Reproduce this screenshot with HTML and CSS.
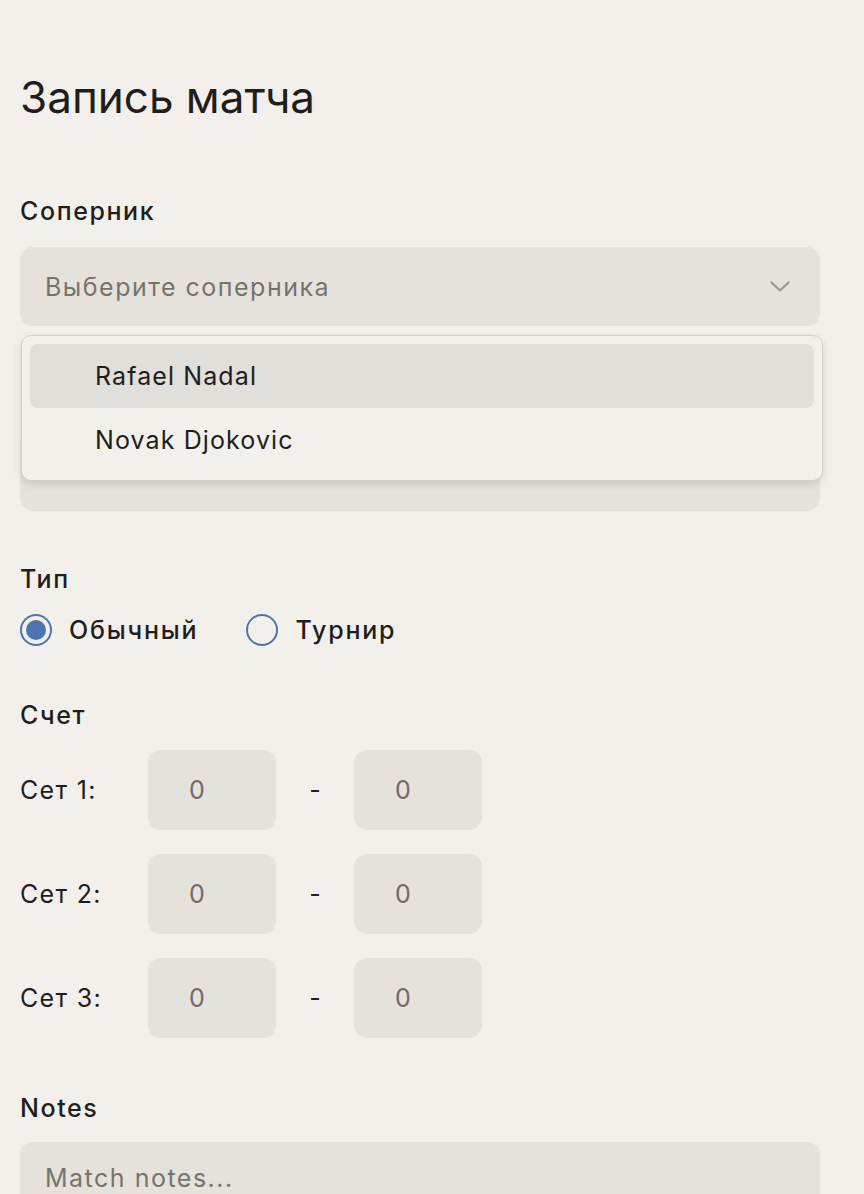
FILE: index.html
```html
<!DOCTYPE html>
<html lang="ru">
<head>
<meta charset="utf-8">
<title>Запись матча</title>
<link rel="stylesheet" href="styles.css">
</head>
<body>
<main class="page">
  <h1 class="title">Запись матча</h1>

  <section class="group group-opponent">
    <div class="label">Соперник</div>
    <div class="select-wrap">
      <div class="select">
        <span class="placeholder">Выберите соперника</span>
        <svg class="chevron" width="20" height="12" viewBox="0 0 20 12"><path d="M1.5 1.5 L10 9.5 L18.5 1.5" fill="none" stroke="#9b9894" stroke-width="2.2" stroke-linecap="round" stroke-linejoin="round"/></svg>
      </div>
      <ul class="menu">
        <li class="menu-item active">Rafael Nadal</li>
        <li class="menu-item">Novak Djokovic</li>
      </ul>
    </div>
    <div class="box hidden-field"></div>
  </section>

  <section class="group group-type">
    <div class="label">Тип</div>
    <div class="radios">
      <label class="radio"><span class="dot checked"></span><span>Обычный</span></label>
      <label class="radio"><span class="dot"></span><span>Турнир</span></label>
    </div>
  </section>

  <section class="group group-score">
    <div class="label">Счет</div>
    <div class="sets">
      <div class="set-row"><span class="set-label">Сет 1:</span><div class="score">0</div><span class="dash">-</span><div class="score">0</div></div>
      <div class="set-row"><span class="set-label">Сет 2:</span><div class="score">0</div><span class="dash">-</span><div class="score">0</div></div>
      <div class="set-row"><span class="set-label">Сет 3:</span><div class="score">0</div><span class="dash">-</span><div class="score">0</div></div>
    </div>
  </section>

  <section class="group group-notes">
    <div class="label">Notes</div>
    <div class="box textarea"><span class="placeholder">Match notes...</span></div>
  </section>
</main>
</body>
</html>
```

FILE: styles.css
```css
* { box-sizing: border-box; }
html, body {
  margin: 0;
  padding: 0;
  background: #f3f0eb;
  font-family: Inter, "Noto Sans", sans-serif;
  color: #1f1e1c;
  overflow: hidden;
  height: 1194px;
}
.page {
  width: 864px;
  padding: 70px 44px 0 20px;
}
.title {
  margin: 0;
  font-size: 44px;
  line-height: 54px;
  font-weight: 400;
  letter-spacing: 0;
}
.label {
  font-size: 25px;
  line-height: 30px;
  font-weight: 500;
  letter-spacing: 1.6px;
}
.group-opponent { margin-top: 72px; }
.group-opponent .label { margin-bottom: 21px; }
.select-wrap { position: relative; }
.select, .box {
  background: #e5e2dc;
  border-radius: 13px;
  height: 79px;
}
.select {
  display: flex;
  align-items: center;
  justify-content: space-between;
  padding: 0 30px 0 25px;
}
.placeholder {
  font-size: 25px;
  color: #76736f;
  letter-spacing: 1.5px;
}
.chevron { display: block; }
.menu {
  position: absolute;
  top: 88px;
  left: 1px;
  right: -3px;
  margin: 0;
  padding: 8px;
  list-style: none;
  background: #f3f0eb;
  border: 1.5px solid #d3d0ca;
  border-radius: 10px;
  box-shadow: 0 3px 8px rgba(0,0,0,0.12);
  z-index: 2;
}
.menu-item {
  height: 64px;
  display: flex;
  align-items: center;
  padding-left: 65px;
  font-size: 25px;
  letter-spacing: 1.1px;
  color: #1f1e1c;
  border-radius: 8px;
}
.menu-item.active { background: #e1dfda; }
.hidden-field { margin-top: 106px; }

.group-type { margin-top: 53px; }
.group-type .label { margin-bottom: 20px; }
.radios {
  display: flex;
  align-items: center;
  gap: 48px;
}
.radio {
  display: flex;
  align-items: center;
  gap: 17px;
  font-size: 25px;
  font-weight: 500;
  letter-spacing: 1.8px;
}
.dot {
  width: 32px;
  height: 32px;
  border-radius: 50%;
  border: 2px solid #4b74b1;
  display: flex;
  align-items: center;
  justify-content: center;
}
.dot.checked::after {
  content: "";
  width: 20px;
  height: 20px;
  border-radius: 50%;
  background: #4b74b1;
}

.group-score { margin-top: 54px; }
.group-score .label { margin-bottom: 20px; }
.sets {
  display: flex;
  flex-direction: column;
  gap: 24px;
}
.set-row {
  display: flex;
  align-items: center;
}
.set-label {
  width: 128px;
  font-size: 25px;
  letter-spacing: 1.3px;
}
.score {
  width: 128px;
  height: 80px;
  background: #e5e2dc;
  border-radius: 13px;
  display: flex;
  align-items: center;
  padding-left: 41px;
  font-size: 25px;
  color: #6e6b67;
}
.dash {
  width: 78px;
  text-align: center;
  font-size: 25px;
  color: #1f1e1c;
}

.group-notes { margin-top: 55px; }
.group-notes .label { margin-bottom: 19px; }
.textarea {
  height: 120px;
  padding: 21px 25px;
}
```
